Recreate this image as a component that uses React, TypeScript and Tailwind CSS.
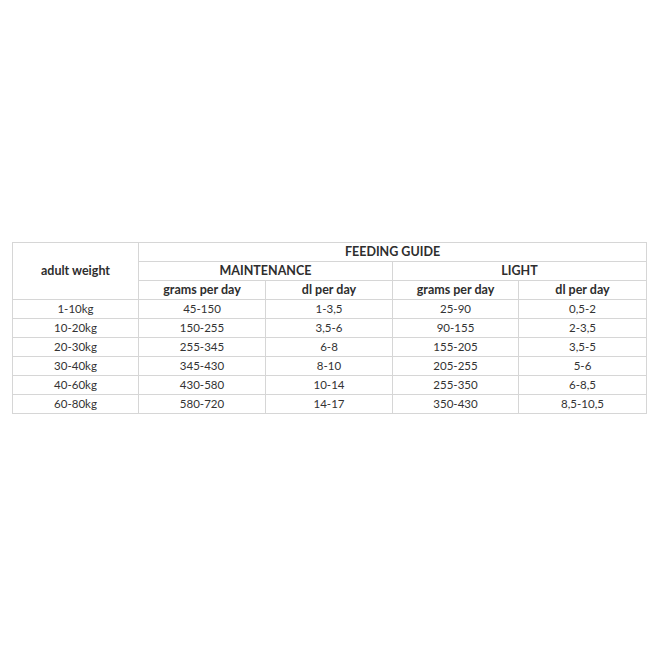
const rows = [
  ['1-10kg', '45-150', '1-3,5', '25-90', '0,5-2'],
  ['10-20kg', '150-255', '3,5-6', '90-155', '2-3,5'],
  ['20-30kg', '255-345', '6-8', '155-205', '3,5-5'],
  ['30-40kg', '345-430', '8-10', '205-255', '5-6'],
  ['40-60kg', '430-580', '10-14', '255-350', '6-8,5'],
  ['60-80kg', '580-720', '14-17', '350-430', '8,5-10,5'],
];

const cell = 'border border-[#d6d6d6] h-[19px] p-0 text-center align-middle';

export default function App() {
  return (
    <div className="w-[660px] h-[660px] bg-white pt-[242px] pl-[12px] font-['Lato','Open_Sans',sans-serif] text-[#2e2e2e]">
      <table className="table-fixed border-collapse w-[634px] text-[11.5px] leading-none">
        <colgroup>
          <col className="w-[126px]" />
          <col className="w-[127px]" />
          <col className="w-[127px]" />
          <col className="w-[126px]" />
          <col className="w-[128px]" />
        </colgroup>
        <thead className="font-bold">
          <tr>
            <th rowSpan={3} className={`${cell} text-[12.5px]`}>adult weight</th>
            <th colSpan={4} className={`${cell} text-[12.5px]`}>FEEDING GUIDE</th>
          </tr>
          <tr>
            <th colSpan={2} className={`${cell} text-[12.5px]`}>MAINTENANCE</th>
            <th colSpan={2} className={`${cell} text-[12.5px]`}>LIGHT</th>
          </tr>
          <tr>
            <th className={`${cell} text-[12.5px]`}>grams per day</th>
            <th className={`${cell} text-[12.5px]`}>dl per day</th>
            <th className={`${cell} text-[12.5px]`}>grams per day</th>
            <th className={`${cell} text-[12.5px]`}>dl per day</th>
          </tr>
        </thead>
        <tbody className="text-[#333]">
          {rows.map((r) => (
            <tr key={r[0]}>
              {r.map((v, i) => (
                <td key={i} className={cell}>{v}</td>
              ))}
            </tr>
          ))}
        </tbody>
      </table>
    </div>
  );
}
